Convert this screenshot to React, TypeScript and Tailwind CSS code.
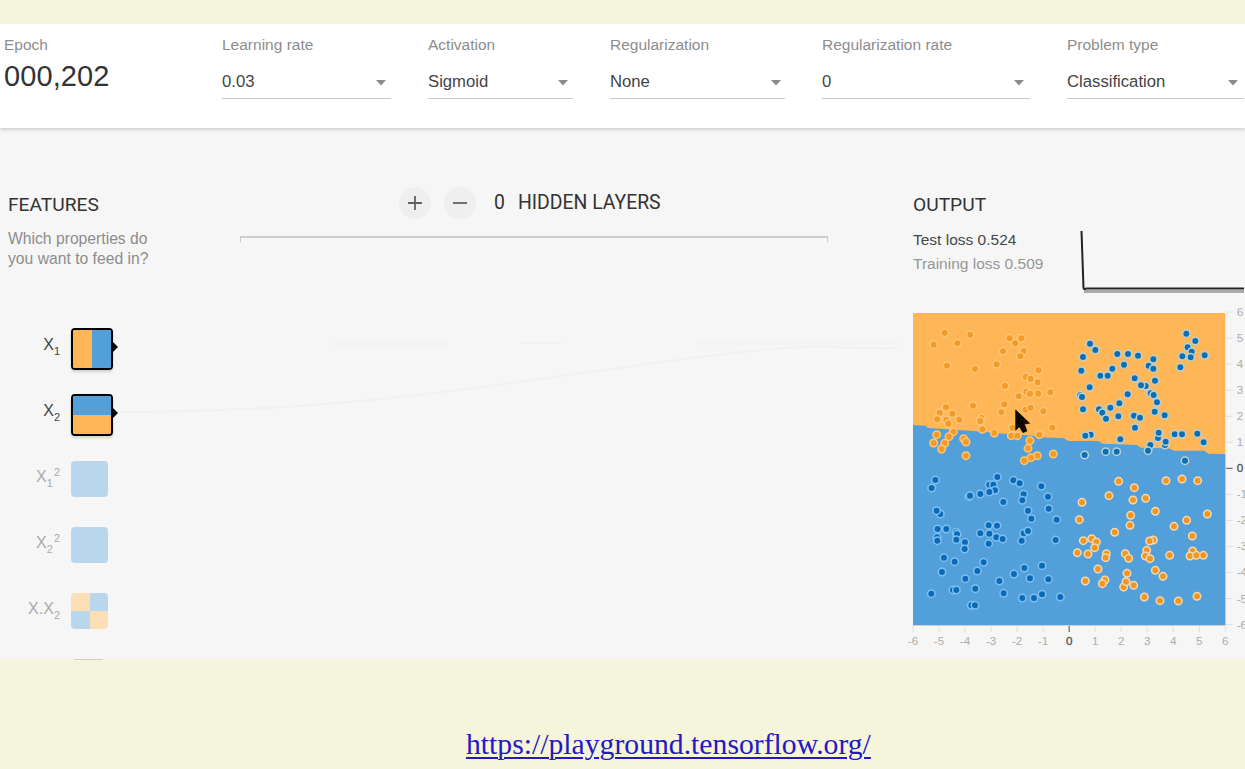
import type { ReactNode } from "react";

type Pt = [number, number];

const topLeft: Pt[] = [[119,83],[86,119],[157,115],[196,89],[126,182],[210,192],[314,100],[349,100],[331,115],[294,139],[356,138],[346,154],[275,178],[401,196],[362,215],[377,221],[398,232],[300,243],[364,260],[375,266],[400,266],[436,262],[341,274],[298,298],[289,322],[362,314],[377,308],[415,319],[204,302],[123,307],[104,324],[142,326],[97,343],[124,345],[130,356],[163,344],[229,339],[226,348],[232,373],[268,384],[322,368],[442,368],[403,389],[319,392],[337,392],[95,389],[145,380],[132,395],[86,414],[119,415],[110,432],[176,401],[183,411],[183,452],[375,407],[369,430],[397,452],[378,458],[358,467],[445,447]];

const topRight: Pt[] = [[60,116],[76,135],[39,156],[34,197],[142,147],[174,147],[204,152],[162,179],[127,191],[250,163],[236,182],[250,191],[349,86],[376,108],[353,127],[365,140],[337,154],[362,157],[404,151],[331,187],[91,212],[113,212],[194,220],[227,243],[213,241],[255,227],[59,247],[31,271],[36,276],[173,268],[242,265],[251,270],[261,292],[148,295],[39,313],[87,313],[121,308],[97,323],[108,341],[145,334],[192,332],[210,338],[254,320],[284,331],[195,368],[62,389],[46,392],[151,403],[264,399],[266,383],[314,388],[336,388],[382,386],[401,412],[285,420],[287,410],[241,420],[234,437],[44,450],[107,440],[140,440],[345,467]];

const bottomLeft: Pt[] = [[91,45],[80,69],[277,36],[253,59],[265,59],[270,76],[253,81],[226,87],[192,95],[195,92],[295,111],[325,46],[344,55],[356,88],[352,106],[409,64],[429,95],[431,131],[369,137],[379,161],[455,164],[106,147],[95,137],[98,192],[124,192],[153,202],[156,208],[96,217],[97,227],[154,224],[180,232],[179,252],[251,181],[276,182],[226,205],[253,206],[274,217],[293,222],[251,236],[356,205],[369,198],[350,227],[452,225],[117,278],[149,290],[236,292],[217,318],[111,321],[181,341],[358,309],[327,327],[411,302],[375,340],[430,343],[283,348],[144,375],[154,375],[211,371],[79,386],[296,385],[199,421],[210,421],[352,399],[387,399],[411,388],[466,396]];

const bottomRight: Pt[] = [[146,49],[193,68],[117,92],[189,105],[227,100],[288,47],[336,42],[383,47],[36,112],[28,164],[256,139],[182,151],[180,181],[134,202],[412,147],[350,166],[312,184],[367,213],[40,227],[65,221],[79,231],[74,248],[22,263],[54,267],[109,266],[107,278],[166,266],[176,280],[250,225],[239,228],[230,256],[226,273],[240,281],[299,271],[368,258],[360,273],[379,271],[400,271],[84,312],[171,325],[256,316],[279,334],[46,348],[105,345],[97,356],[161,366],[168,350],[191,361],[223,396],[270,407],[325,408],[381,394]];

const ticks = [-6, -5, -4, -3, -2, -1, 0, 1, 2, 3, 4, 5, 6];

function Dots({ pts, dx, dy, fill, ring }: { pts: Pt[]; dx: number; dy: number; fill: string; ring: string }) {
  return (
    <g transform={`translate(${dx} ${dy})`} fill={fill} stroke={ring} strokeWidth={4.6}>
      {pts.map(([x, y], i) => (
        <circle key={i} cx={x} cy={y} r={11.2} />
      ))}
    </g>
  );
}

function Heatmap() {
  return (
    <svg width="340" height="350" viewBox="0 0 1020 1050" className="block" fontFamily="Liberation Sans, Arial, sans-serif">
      <rect x="24" y="24" width="937" height="937" fill="#ffb657" />
      <path d="M24 360 L62 362 L68 369 L150 374 L235 380 L310 387 L385 392 L395 397 L475 399 L490 408 L580 408 L594 416 L695 420 L708 428 L790 430 L808 437 L898 437 L910 446 L961 447 V961 H24Z" fill="#539fd9" />
      <Dots pts={topLeft} dx={0} dy={0} fill="#f39a28" ring="#fdc676" />
      <Dots pts={topRight} dx={495} dy={0} fill="#0d6eb2" ring="#b9d1d3" />
      <Dots pts={bottomLeft} dx={0} dy={480} fill="#0b6ab8" ring="#7dc0f1" />
      <Dots pts={bottomRight} dx={495} dy={480} fill="#f39620" ring="#f1dab3" />
      {ticks.map((t) => {
        const x = 492.5 + t * 78.1;
        const y = 490 - t * 78.1;
        const color = t === 0 ? "#555" : "#adadad";
        return (
          <g key={t} fill={color} stroke={color}>
            <path d={`M${x} 963v18M963 ${y}h20`} strokeWidth={t === 0 ? 4 : 2} opacity={t === 0 ? 0.8 : 0.45} />
            <text x={x} y={1020} fontSize={35} textAnchor="middle" strokeWidth={t === 0 ? 1 : 0}>{t}</text>
            <text x={t < 0 ? 995 : 995} y={y + 12} fontSize={35} strokeWidth={t === 0 ? 1 : 0}>{t}</text>
          </g>
        );
      })}
      <path d="M332 315 V376 L343 365 L354 383 L366 378 L358 357 L374 355Z" fill="#0c0604" stroke="#0c0604" strokeWidth="2" />
    </svg>
  );
}

function Select({ label, value, pad }: { label: string; value: string; pad: string }) {
  return (
    <div>
      <div className="text-[15.5px] leading-[18px] whitespace-nowrap text-[#8d8d8d]">{label}</div>
      <div className={`mt-[14px] flex h-[31px] items-start justify-between border-b border-[#c9c9c9] pt-[4px] ${pad}`}>
        <span className="text-[16.7px] leading-[20px] whitespace-nowrap text-[#444]">{value}</span>
        <svg width="10" height="6" viewBox="0 0 10 6" className="mt-[8px]">
          <path d="M0 0h10L5 5.6z" fill="#8b8b8b" />
        </svg>
      </div>
    </div>
  );
}

function Feature({ label, active, children }: { label: ReactNode; active?: boolean; children: ReactNode }) {
  return (
    <div className="flex h-[66px] items-start">
      <div className={`w-[60px] pt-[7px] text-right text-[16px] leading-[20px] whitespace-nowrap ${active ? "text-[#444]" : "text-[#aaa]"}`}>
        {label}
      </div>
      <div className="ml-[11px]">
        {active ? (
          <div className="flex items-center">
            <div className="h-[42px] w-[42px] overflow-hidden rounded-[4px] border-[2.5px] border-black shadow-[0_2px_3px_rgba(0,0,0,0.15)]">{children}</div>
            <svg width="5" height="10" viewBox="0 0 5 10" className="-mt-[5px]">
              <path d="M0 0L5 5L0 10Z" fill="#0c0c0c" />
            </svg>
          </div>
        ) : (
          <div className="mt-px h-[36px] w-[37px] overflow-hidden rounded-[4px]">{children}</div>
        )}
      </div>
    </div>
  );
}

const Sub = ({ children }: { children: ReactNode }) => <span className="relative top-[5px] text-[11px]">{children}</span>;
const Sup = ({ children }: { children: ReactNode }) => <span className="relative -top-[6px] ml-[1px] text-[11px]">{children}</span>;

export default function App() {
  return (
    <div className="flex h-[769px] w-[1245px] flex-col overflow-hidden bg-[#f5f5dc] pt-[24px] font-['Liberation_Sans',Arial,sans-serif]">
      <header className="z-10 grid h-[104px] shrink-0 grid-cols-[181px_169px_145px_175px_208px_177px] gap-x-[37px] bg-white pt-[12px] pl-[4px] shadow-[0_2px_3px_rgba(0,0,0,0.15)]">
        <div>
          <div className="text-[15.5px] leading-[18px] text-[#8d8d8d]">Epoch</div>
          <div className="mt-[6px] text-[29px] leading-[32px] tracking-[0.1px] text-[#333]">000,202</div>
        </div>
        <Select label="Learning rate" value="0.03" pad="pr-[5px]" />
        <Select label="Activation" value="Sigmoid" pad="pr-[5px]" />
        <Select label="Regularization" value="None" pad="pr-[4px]" />
        <Select label="Regularization rate" value="0" pad="pr-[6px]" />
        <Select label="Problem type" value="Classification" pad="pr-[6px]" />
      </header>

      <main className="flex h-[532px] shrink-0 overflow-hidden bg-[#f6f6f6]">
        <section className="w-[240px] shrink-0 pt-[65px]">
          <h2 className="pl-[8px] font-[Roboto] text-[19.2px] leading-[24px] text-[#333]">FEATURES</h2>
          <p className="mt-[12px] pl-[8px] text-[15.7px] leading-[20px] text-[#8d8d8d]">
            Which properties do
            <br />
            you want to feed in?
          </p>
          <div className="mt-[59px]">
            <Feature active label={<>X<Sub>1</Sub></>}>
              <div className="flex h-full">
                <div className="w-1/2 bg-[#ffb657]" />
                <div className="w-1/2 bg-[#539fd9]" />
              </div>
            </Feature>
            <Feature active label={<>X<Sub>2</Sub></>}>
              <div className="flex h-full flex-col">
                <div className="h-1/2 bg-[#539fd9]" />
                <div className="h-1/2 bg-[#ffb657]" />
              </div>
            </Feature>
            <Feature label={<>X<Sub>1</Sub><Sup>2</Sup></>}>
              <div className="h-full bg-[#b9d6ec]" />
            </Feature>
            <Feature label={<>X<Sub>2</Sub><Sup>2</Sup></>}>
              <div className="h-full bg-[#b9d6ec]" />
            </Feature>
            <Feature label={<>X.X<Sub>2</Sub></>}>
              <div className="grid h-full grid-cols-2 grid-rows-2">
                <div className="bg-[#fddfb5]" />
                <div className="bg-[#b9d6ec]" />
                <div className="bg-[#b9d6ec]" />
                <div className="bg-[#fddfb5]" />
              </div>
            </Feature>
            <div className="mt-px ml-[74px] h-px w-[29px] bg-[#cfcfcc]" />
          </div>
        </section>

        <section className="w-[673px] shrink-0 pt-[58px]">
          <div className="ml-[159px] flex h-[33px] items-center">
            <div className="flex h-[32px] w-[32px] items-center justify-center rounded-full bg-[#efefef]">
              <svg width="16" height="16" viewBox="0 0 16 16" stroke="#626262" strokeWidth="1.8"><path d="M1 8h14M8 1v14" /></svg>
            </div>
            <div className="ml-[13px] flex h-[32px] w-[32px] items-center justify-center rounded-full bg-[#efefef]">
              <svg width="16" height="16" viewBox="0 0 16 16" stroke="#626262" strokeWidth="1.8"><path d="M1 8h14" /></svg>
            </div>
            <span className="ml-[18px] font-[Roboto] text-[19.4px] leading-[24px] text-[#333]">0</span>
            <h2 className="ml-[13px] font-[Roboto] text-[19.4px] leading-[24px] text-[#333]">HIDDEN LAYERS</h2>
          </div>
          <div className="mt-[17px] h-[6px] w-[588px] border-x-[1.5px] border-t-2 border-[#cecece]" />
          <svg width="673" height="120" viewBox="0 0 673 120" className="mt-[68px] -ml-[120px] w-[793px]" preserveAspectRatio="none" fill="none" stroke="#f1f1f1">
            <path d="M0 102C190 102 310 76 460 52S590 40 660 38" strokeWidth="2" />
            <path d="M180 34H280M340 33H375" strokeWidth="1.5" />
            <path d="M490 33H660" strokeWidth="4" opacity=".6" />
          </svg>
        </section>

        <section className="w-[332px] shrink-0 pt-[65px]">
          <h2 className="font-[Roboto] text-[19.2px] leading-[24px] text-[#333]">OUTPUT</h2>
          <div className="mt-[9px] flex h-[79px] justify-between">
            <div className="pt-[2px] text-[15.5px] leading-[24px]">
              <div className="text-[#484848]">Test loss 0.524</div>
              <div className="text-[#979797]">Training loss 0.509</div>
            </div>
            <svg width="166" height="72" viewBox="0 0 166 72" fill="none">
              <path d="M5 65.5H165" stroke="#aaa" strokeWidth="3" />
              <path d="M2.5 5L4.5 62Q5 64 7 62.5H165" stroke="#222" strokeWidth="2" />
            </svg>
          </div>
          <div className="-ml-[8px]">
            <Heatmap />
          </div>
        </section>
      </main>

      <footer className="pt-[66px] pl-[466px]">
        <a href="#" className="font-['Liberation_Serif',serif] text-[29.7px] leading-[36px] text-[#2618c4] underline decoration-[1.5px] underline-offset-[3px]">
          https://playground.tensorflow.org/
        </a>
      </footer>
    </div>
  );
}
